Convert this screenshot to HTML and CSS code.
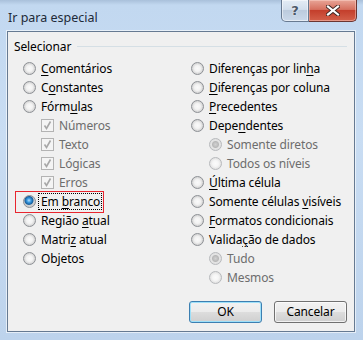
FILE: index.html
```html
<!DOCTYPE html>
<html lang="pt">
<head>
    <meta charset="UTF-8">
    <title>Ir para especial</title>
    <link rel="stylesheet" href="styles.css">
</head>
<body>
    <div class="window">
        <div class="titlebar">
            <span class="title">Ir para especial</span>
            <div class="caption-btns">
                <span class="help-btn">?</span>
                <span class="close-btn">
                    <svg width="14" height="11" viewBox="0 0 14 11">
                        <path d="M2 1.5 L12 9.5 M12 1.5 L2 9.5" stroke="#3d2622" stroke-width="4" stroke-linecap="square"/>
                        <path d="M2 1.5 L12 9.5 M12 1.5 L2 9.5" stroke="#fff" stroke-width="2.2" stroke-linecap="square"/>
                    </svg>
                </span>
            </div>
        </div>
        <div class="client">
            <div class="group-head">
                <span>Selecionar</span>
                <span class="rule"></span>
            </div>
            <div class="options">
                <div class="col">
                    <div class="row"><span class="radio"></span><span class="label"><u>C</u>omentários</span></div>
                    <div class="row"><span class="radio"></span><span class="label">C<u>o</u>nstantes</span></div>
                    <div class="row"><span class="radio"></span><span class="label">Fórm<u>u</u>las</span></div>
                    <div class="row sub off"><span class="check"></span><span class="label">Números</span></div>
                    <div class="row sub off"><span class="check"></span><span class="label">Texto</span></div>
                    <div class="row sub off"><span class="check"></span><span class="label">Lógicas</span></div>
                    <div class="row sub off"><span class="check"></span><span class="label">Erros</span></div>
                    <div class="row marked"><span class="radio on"></span><span class="label focus">Em <u>b</u>ranco</span></div>
                    <div class="row"><span class="radio"></span><span class="label">Região <u>a</u>tual</span></div>
                    <div class="row"><span class="radio"></span><span class="label">Matri<u>z</u> atual</span></div>
                    <div class="row"><span class="radio"></span><span class="label">Objetos</span></div>
                </div>
                <div class="col">
                    <div class="row"><span class="radio"></span><span class="label">Diferenças por lin<u>h</u>a</span></div>
                    <div class="row"><span class="radio"></span><span class="label"><u>D</u>iferenças por coluna</span></div>
                    <div class="row"><span class="radio"></span><span class="label"><u>P</u>recedentes</span></div>
                    <div class="row"><span class="radio"></span><span class="label">Depe<u>n</u>dentes</span></div>
                    <div class="row sub off"><span class="radio on"></span><span class="label">Somente diretos</span></div>
                    <div class="row sub off"><span class="radio"></span><span class="label">Todos os níveis</span></div>
                    <div class="row"><span class="radio"></span><span class="label"><u>Ú</u>ltima célula</span></div>
                    <div class="row"><span class="radio"></span><span class="label">Somente células <u>v</u>isíveis</span></div>
                    <div class="row"><span class="radio"></span><span class="label"><u>F</u>ormatos condicionais</span></div>
                    <div class="row"><span class="radio"></span><span class="label">Valida<u>ç</u>ão de dados</span></div>
                    <div class="row sub off"><span class="radio on"></span><span class="label">Tudo</span></div>
                    <div class="row sub off"><span class="radio"></span><span class="label">Mesmos</span></div>
                </div>
            </div>
            <div class="actions">
                <div class="btn default">OK</div>
                <div class="btn">Cancelar</div>
            </div>
        </div>
    </div>
</body>
</html>
```

FILE: styles.css
```css
* {
    box-sizing: border-box;
}
body {
    margin: 0;
    width: 363px;
    height: 340px;
    overflow: hidden;
    font-family: "Noto Sans", "Open Sans", sans-serif;
    font-size: 12px;
    letter-spacing: -0.12px;
    color: #000;
}
.window {
    width: 363px;
    height: 340px;
    padding: 0 8px 8px 7px;
    display: flex;
    flex-direction: column;
    background: linear-gradient(to bottom, #a9c0da 0, #c2d8f0 5px, #c9ddf3 40%, #bdd3ec 100%);
}
.titlebar {
    height: 31px;
    display: flex;
    align-items: flex-start;
}
.title {
    padding-top: 9px;
    padding-left: 1px;
    font-size: 12.5px;
    letter-spacing: 0;
    color: #1e2a38;
}
.caption-btns {
    margin-left: auto;
    margin-right: -2px;
    display: flex;
}
.help-btn {
    width: 28px;
    height: 22px;
    border: 1px solid #687a91;
    border-top: none;
    border-radius: 0 0 0 5px;
    background: linear-gradient(to bottom, #e4ecf5 0, #d2deec 45%, #bccbdd 50%, #cbd9ea 100%);
    box-shadow: inset 0 0 0 1px rgba(255, 255, 255, 0.5);
    text-align: center;
    font-family: "DejaVu Sans", sans-serif;
    font-weight: bold;
    font-size: 13px;
    line-height: 21px;
    color: #4c5868;
    text-shadow: 0 0 2px #fff;
}
.close-btn {
    width: 48px;
    height: 22px;
    border: 1px solid #6b3430;
    border-left: none;
    border-top: none;
    border-radius: 0 0 5px 0;
    background: linear-gradient(to bottom, #e8a597 0, #d6705f 45%, #c43f2c 50%, #d3604a 100%);
    box-shadow: inset 0 0 0 1px rgba(255, 220, 210, 0.45);
    display: flex;
    align-items: center;
    justify-content: center;
}
.close-btn svg {
    display: block;
}
.client {
    flex: 1;
    background: #f0f0f0;
    border: 1px solid #667a92;
    box-shadow: 0 0 0 1px rgba(255, 255, 255, 0.6);
    display: flex;
    flex-direction: column;
    padding: 7px 7px 8px 6px;
}
.group-head {
    height: 15px;
    display: flex;
    align-items: center;
    line-height: 15px;
}
.group-head .rule {
    flex: 1;
    height: 1px;
    margin-left: 6px;
    margin-right: 0;
    background: #d5dfe5;
}
.options {
    margin-top: 5px;
    padding-left: 9px;
    display: grid;
    grid-template-columns: 168px 1fr;
}
.row {
    height: 19px;
    display: flex;
    align-items: center;
    position: relative;
}
.row.sub {
    padding-left: 18px;
}
.row.off .label {
    color: #6d6d6d;
}
.label {
    line-height: 15px;
    white-space: nowrap;
}
.label u {
    text-decoration-thickness: 1px;
    text-underline-offset: 2px;
}
.radio {
    width: 13px;
    height: 13px;
    margin-right: 5px;
    border-radius: 50%;
    border: 1px solid #8d9095;
    background: radial-gradient(circle at 50% 50%, #fafafa 0, #f2f2f2 3px, #dadada 5px, #cfcfcf 6px);
}
.radio.on {
    background: radial-gradient(circle at 45% 40%, #b8e0fb 0, #3c9de3 2px, #17609f 4px, #d0d0d0 5px, #cdcdcd 6px);
}
.off .radio {
    border-color: #b7b9bc;
    background: radial-gradient(circle at 50% 50%, #fbfbfb 0, #f5f5f5 3px, #e6e6e6 5px, #e0e0e0 6px);
}
.off .radio.on {
    background: radial-gradient(circle at 50% 50%, #d2d2d2 0, #b8b8b8 3px, #e4e4e4 4px, #e0e0e0 6px);
}
.check {
    width: 13px;
    height: 13px;
    margin-right: 5px;
    border: 1px solid #b3b3b3;
    background: #f4f4f4 url("data:image/svg+xml,%3Csvg xmlns='http://www.w3.org/2000/svg' width='11' height='11'%3E%3Cpath d='M2.5 5.5 L4.5 8.5 L8.5 1.5' fill='none' stroke='%23a7a7a7' stroke-width='1.6'/%3E%3C/svg%3E") no-repeat center;
}
.focus {
    border: 1px dotted #000;
    padding: 0 1px 0 2px;
    margin-left: -3px;
    line-height: 15px;
}
.marked::after {
    content: "";
    position: absolute;
    left: -8px;
    right: -2px;
    top: -1px;
    bottom: -2px;
    border: 1px solid #e8262f;
}
.row.marked {
    align-self: start;
    width: max-content;
}
.actions {
    margin-top: auto;
    display: flex;
    justify-content: flex-end;
    gap: 12px;
}
.btn {
    width: 73px;
    height: 22px;
    border: 1px solid #707070;
    border-radius: 3px;
    background: linear-gradient(to bottom, #f2f2f2 0, #ebebeb 50%, #dddddd 51%, #cfcfcf 100%);
    box-shadow: inset 0 0 0 1px rgba(255, 255, 255, 0.7);
    text-align: center;
    line-height: 20px;
}
.btn.default {
    border-color: #3c7fb1;
    box-shadow: inset 0 0 0 1px #9ee0f9;
}
```
